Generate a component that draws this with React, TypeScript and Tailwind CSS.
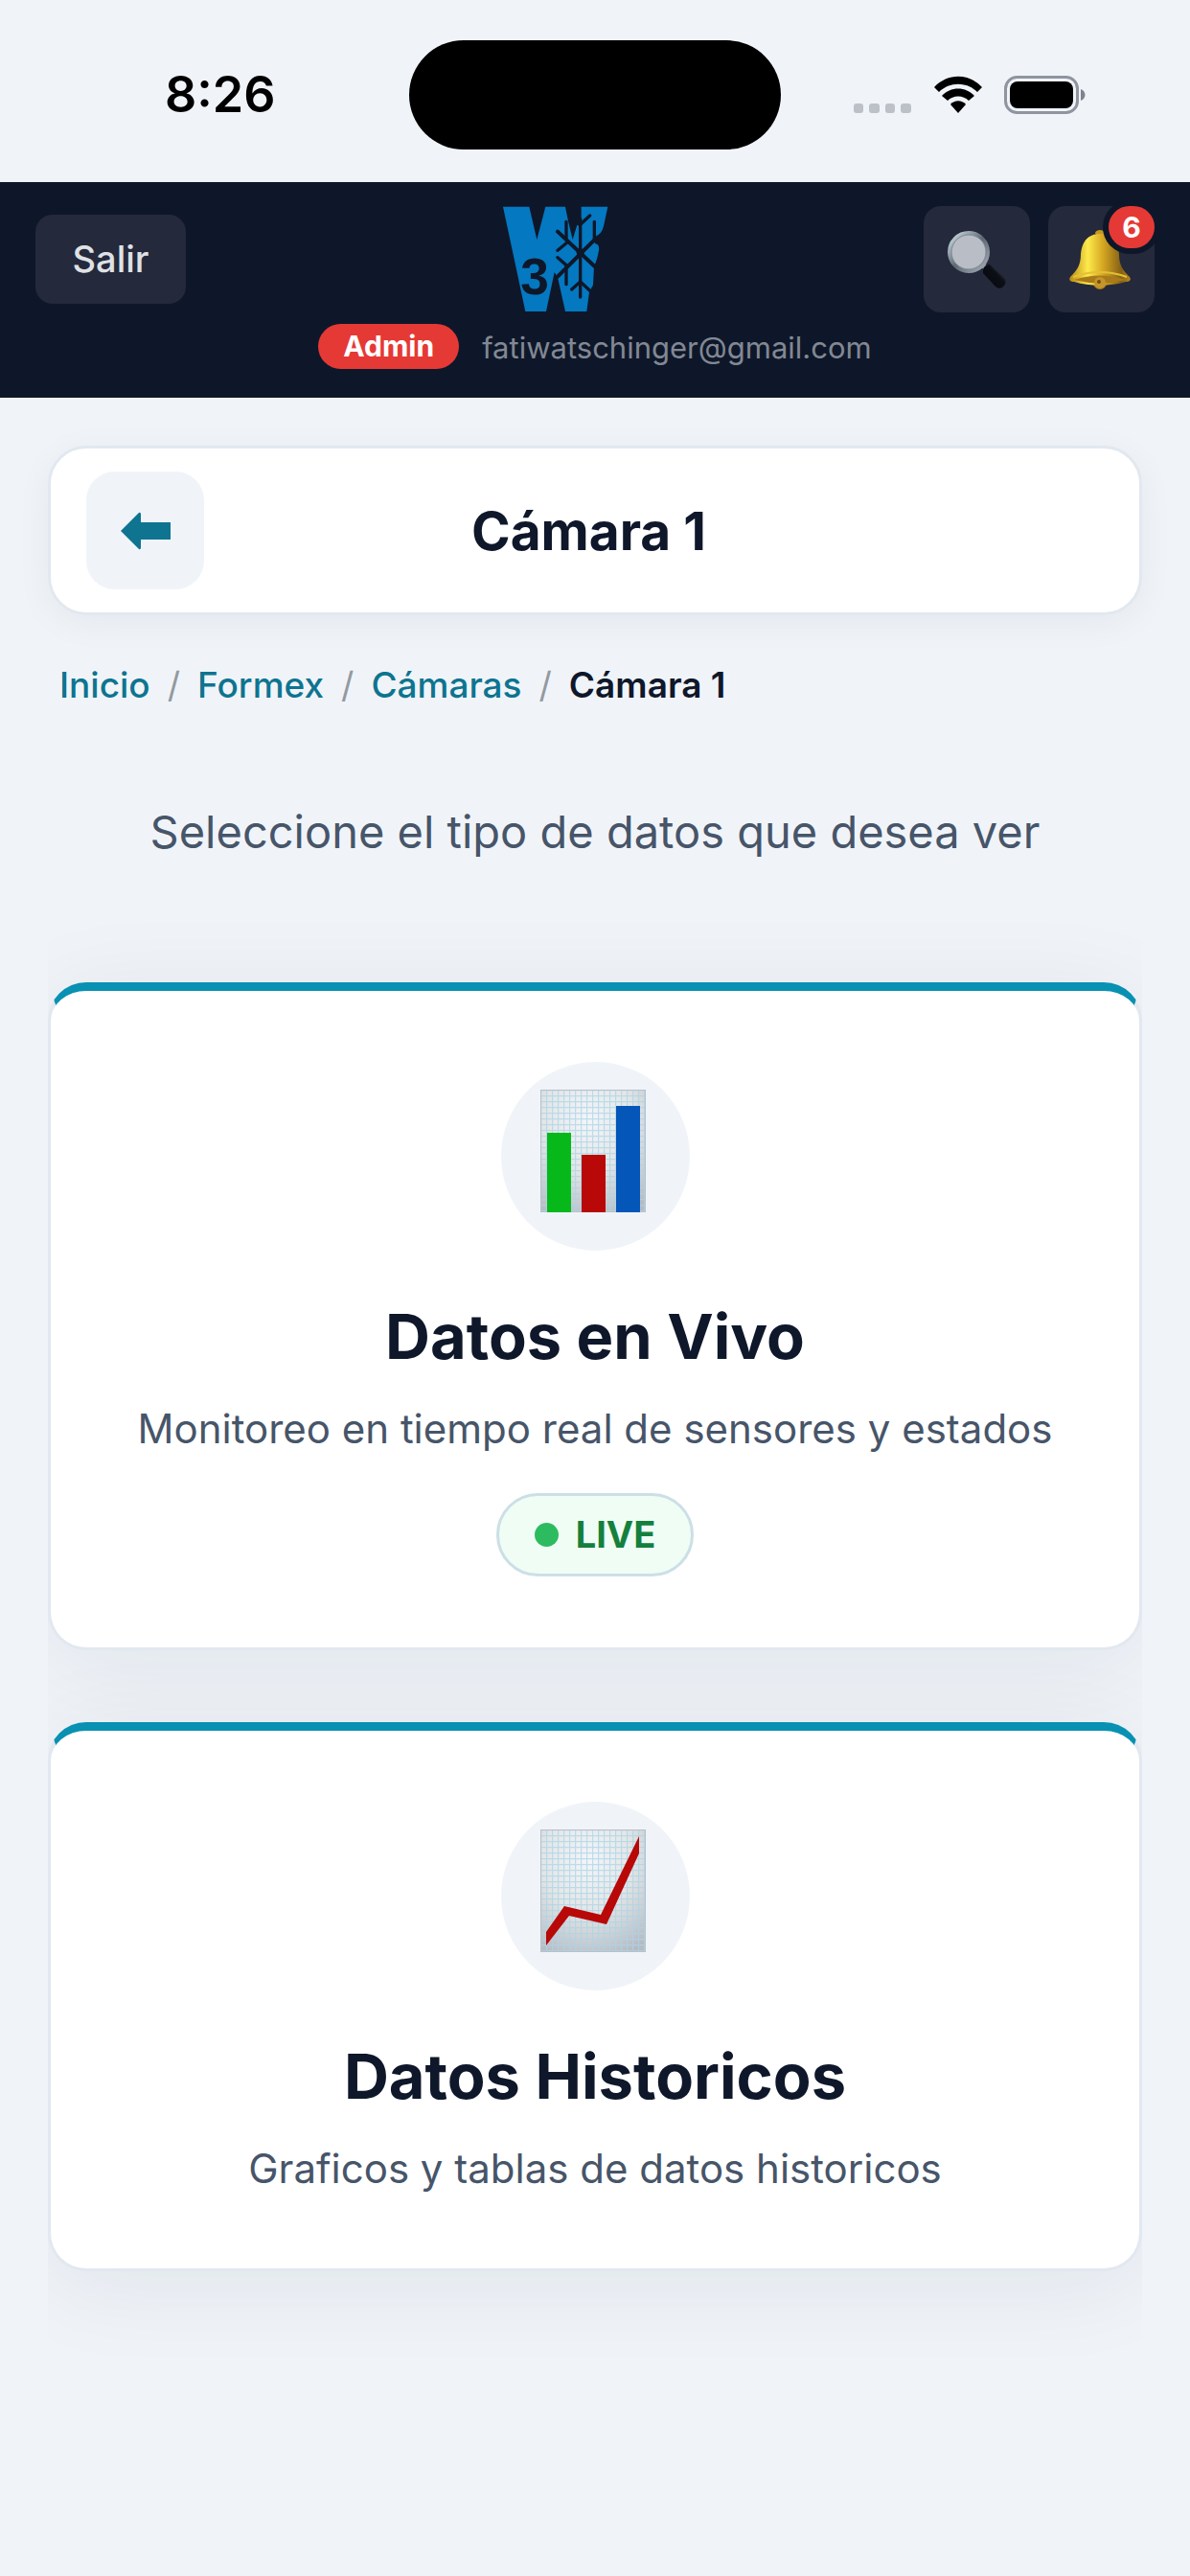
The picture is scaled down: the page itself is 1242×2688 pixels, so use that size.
import { useId, type ReactNode } from "react"

const crumbs = ["Inicio", "Formex", "Cámaras"]

function StatusBar() {
  return (
    <div className="grid h-[190px] grid-cols-[1fr_388px_1fr] items-center pt-2">
      <div className="pl-[172px] text-[52px] leading-[60px] font-semibold text-black">8:26</div>
      <div className="h-[114px] rounded-full bg-black" />
      <div className="flex items-center justify-end gap-[22px] pr-[108px]">
        <svg className="h-[40px] w-[62px]" viewBox="0 0 62 40" fill="#bcc0c7">
          <rect x="1" y="29" width="10" height="10" rx="3" />
          <rect x="17" y="29" width="11" height="10" rx="3" />
          <rect x="34" y="29" width="10" height="10" rx="3" />
          <rect x="50" y="29" width="11" height="10" rx="3" />
        </svg>
        <svg className="h-[40px] w-[52px]" viewBox="0 0 52 40">
          <path d="M1 12C15-3 37-3 51 12L46 17C35 6 17 6 6 17Z" />
          <path d="M9 21C18 11 34 11 43 21L37 26C31 20 21 20 15 26Z" />
          <path d="M18 30C22 25 30 25 34 30L26 39Z" />
        </svg>
        <svg className="h-[40px] w-[86px]" viewBox="0 0 86 40">
          <rect x="1.5" y="1.5" width="75" height="37" rx="12" fill="none" stroke="#8f949f" strokeWidth="3" />
          <rect x="6" y="6" width="66" height="28" rx="8" />
          <path d="M80 14C86 16 86 24 80 26Z" fill="#7f838c" />
        </svg>
      </div>
    </div>
  )
}

function Logo() {
  return (
    <svg className="h-[111px] w-[111px]" viewBox="72 45 333 333" role="img" aria-label="W3">
      <path
        fill="#0478c0"
        d="M75 47H157L181 150L208 47H270L279 92L293 150L307 104L320 112V47H403L390 108Q384 132 367 138L362 162Q378 164 375 184Q370 214 360 234L357 292L345 314L337 375H270L246 268L236 252L210 375H145Z"
      />
      <g fill="none" stroke="#0e1729" strokeWidth="10" strokeLinecap="round">
        <path d="M317 85V330M273 94V150M273 230V290M361 94V150" />
        <path d="M347 75L317 103M290 306L317 282L347 310" />
        <path d="M246 184L275 160M246 206L275 232" />
        <path strokeWidth="12" d="M246 125L362 234M364 148L246 266" />
      </g>
      <circle cx="317" cy="190" r="12" fill="#0e1729" />
      <text x="174" y="322" textAnchor="middle" className="fill-[#0e1729] font-['Liberation_Sans',sans-serif] text-[160px] font-bold">3</text>
    </svg>
  )
}

function SearchIcon() {
  return (
    <svg className="h-[62px] w-[64px]" viewBox="0 0 64 62">
      <defs>
        <linearGradient id="rim" x1="0" y1="0" x2="1" y2="1">
          <stop offset="0" stopColor="#d3e6ea" />
          <stop offset="0.5" stopColor="#5d6773" />
          <stop offset="1" stopColor="#a9b2bb" />
        </linearGradient>
        <linearGradient id="handle" x1="0" y1="1" x2="1" y2="0">
          <stop offset="0" stopColor="#05070d" />
          <stop offset="0.6" stopColor="#0c0f16" />
          <stop offset="1" stopColor="#5b626e" />
        </linearGradient>
      </defs>
      <path d="M38 37L43 42" stroke="#8b949e" strokeWidth="5" />
      <path d="M38 41Q40 36 45 36L61 51Q63 56 58 60Q54 62 51 59L38 45Z" fill="url(#handle)" />
      <circle cx="23" cy="23" r="20" fill="#b9bec6" stroke="url(#rim)" strokeWidth="4" />
      <circle cx="23" cy="23" r="18" fill="none" stroke="#7e8791" strokeWidth="1" />
    </svg>
  )
}

function BellIcon() {
  return (
    <svg className="h-[64px] w-[66px]" viewBox="0 0 66 64">
      <defs>
        <linearGradient id="brass">
          <stop offset="0" stopColor="#b98713" />
          <stop offset="0.3" stopColor="#fdea4c" />
          <stop offset="0.55" stopColor="#d6a722" />
          <stop offset="0.85" stopColor="#856015" />
          <stop offset="1" stopColor="#b58a22" />
        </linearGradient>
      </defs>
      <ellipse cx="33" cy="4" rx="5" ry="3" fill="#c59a20" />
      <circle cx="33" cy="56" r="7" fill="#a87a18" />
      <path d="M33 5C20 5 14 14 13 26C13 38 9 43 2 50C0 53 2 55 6 55C22 60 44 60 60 55C64 55 66 53 64 50C57 43 53 38 53 26C52 14 46 5 33 5Z" fill="url(#brass)" />
      <path d="M6 53Q33 44 60 53Q33 60 6 53Z" fill="#a97a19" />
      <path d="M5 50Q33 40 61 50" fill="none" stroke="#e3c033" strokeWidth="2" />
      <circle cx="33" cy="56" r="6" fill="#c4952a" />
      <circle cx="32" cy="55" r="2" fill="#74500f" />
    </svg>
  )
}

// Graph paper shared by both chart icons
function GraphPaper({ children }: { children: ReactNode }) {
  const id = useId()
  return (
    <svg className="h-[128px] w-[110px]" viewBox="0 0 110 128">
      <defs>
        <radialGradient id={`${id}-paper`} cx="0.45" cy="0.25" r="0.85">
          <stop offset="0" stopColor="#f4f5fa" />
          <stop offset="0.5" stopColor="#e4e5e6" />
          <stop offset="1" stopColor="#b6bac3" />
        </radialGradient>
        <pattern id={`${id}-grid`} width="6" height="6" patternUnits="userSpaceOnUse">
          <path d="M0 .5H6M.5 0V6" stroke="#a9d5e5" strokeWidth="1.4" />
        </pattern>
      </defs>
      <rect width="110" height="128" fill={`url(#${id}-paper)`} />
      <rect width="110" height="128" fill={`url(#${id}-grid)`} opacity="0.75" />
      <rect x="0.5" y="0.5" width="109" height="127" fill="none" stroke="#b9c0c8" />
      {children}
    </svg>
  )
}

function Header() {
  return (
    <header className="bg-[#0e1729] px-[37px] pt-[25px] pb-[27px]">
      <div className="flex items-center justify-between">
        <button className="h-[93px] w-[157px] rounded-[18px] bg-[#24293b] text-[38px] font-medium text-[#dfe1e5]">Salir</button>
        <Logo />
        <div className="flex gap-[19px]">
          <button aria-label="Buscar" className="grid size-[111px] place-items-center rounded-[18px] bg-[#24293b]">
            <SearchIcon />
          </button>
          <button aria-label="Avisos" className="relative grid size-[111px] place-items-center rounded-[18px] bg-[#24293b] pr-1">
            <BellIcon />
            <span className="absolute -top-[6px] -right-[6px] grid h-[56px] w-[60px] place-items-center rounded-full border-6 border-[#0e1729] bg-[#e53935] text-[30px] leading-none font-bold text-white">
              6
            </span>
          </button>
        </div>
      </div>
      <div className="mt-3 flex items-start justify-center gap-6">
        <span className="rounded-full bg-[#e53935] px-[26px] text-[30px] leading-[47px] font-bold text-white">Admin</span>
        <span className="text-[31px] leading-[50px] text-[#828894]">fatiwatschinger@gmail.com</span>
      </div>
    </header>
  )
}

function DataCard({ title, text, live, icon }: { title: string; text: string; live?: boolean; icon: ReactNode }) {
  return (
    <a
      href="#"
      className="flex flex-col items-center rounded-[40px] border-3 border-t-9 border-[#e2e8f0] border-t-[#0891b2] bg-white py-[74px] text-center shadow-[0_14px_100px_rgba(15,23,42,0.07)]"
    >
      <div className="grid size-[197px] place-items-center rounded-full bg-[#f0f4f9] pr-1 pb-3">{icon}</div>
      <h2 className="mt-10 text-[65px] leading-[100px] font-bold text-[#0f172a]">{title}</h2>
      <p className="mt-4 text-[42px] leading-[60px] text-[#475569]">{text}</p>
      {live && (
        <span className="mt-[37px] flex h-[87px] items-center gap-[18px] rounded-full border-3 border-[#cbdfe6] bg-[#f0fdf4] px-[37px] text-[38px] font-bold text-[#15803d]">
          <span className="size-[25px] rounded-full bg-[#2dbb60]" />
          LIVE
        </span>
      )}
    </a>
  )
}

export default function App() {
  return (
    <div className="min-h-screen bg-[#f0f4f9] font-['Inter',sans-serif]">
      <StatusBar />
      <Header />
      <main className="px-[50px] pt-[50px] pb-[74px]">
        <div className="flex items-center rounded-[40px] border-3 border-[#e2e8f0] bg-white px-[37px] py-6 shadow-[0_8px_37px_rgba(15,23,42,0.05)]">
          <button aria-label="Volver" className="grid size-[123px] place-items-center rounded-[30px] bg-[#f0f4f9]">
            <svg className="h-[40px] w-[54px]" viewBox="0 0 54 40" fill="#0e7490">
              <path d="M1 20L20 1Q22 0 22 3V11H53V29H22V37Q22 40 20 39Z" />
            </svg>
          </button>
          <h1 className="flex-1 pr-[136px] text-center text-[55px] leading-[74px] font-bold text-[#0f172a]">Cámara 1</h1>
        </div>

        <nav className="mt-[45px] flex gap-[18px] pl-3 text-[37px] leading-[56px] font-medium text-[#0e7490]">
          {crumbs.map((c) => (
            <span key={c} className="flex gap-[18px]">
              <a href="#">{c}</a>
              <span className="font-normal text-[#94999f]">/</span>
            </span>
          ))}
          <span className="font-semibold text-[#0f172a]">Cámara 1</span>
        </nav>

        <p className="mt-[88px] text-center text-[47px] leading-[74px] text-[#475569]">Seleccione el tipo de datos que desea ver</p>

        {/* the card shadows are cut off at the sides of the column */}
        <div className="mt-[120px] flex flex-col gap-[75px] overflow-x-clip">
          <DataCard
            title="Datos en Vivo"
            text="Monitoreo en tiempo real de sensores y estados"
            live
            icon={
              <GraphPaper>
                <rect x="7" y="45" width="25" height="83" fill="#06b81a" />
                <rect x="43" y="68" width="25" height="60" fill="#b80808" />
                <rect x="79" y="17" width="25" height="111" fill="#0457b9" />
              </GraphPaper>
            }
          />
          <DataCard
            title="Datos Historicos"
            text="Graficos y tablas de datos historicos"
            icon={
              <GraphPaper>
                <path d="M6 107L25 80L63 89L103 7V25L69 99L30 90L6 121Z" fill="#b80808" />
              </GraphPaper>
            }
          />
        </div>
      </main>
    </div>
  )
}
